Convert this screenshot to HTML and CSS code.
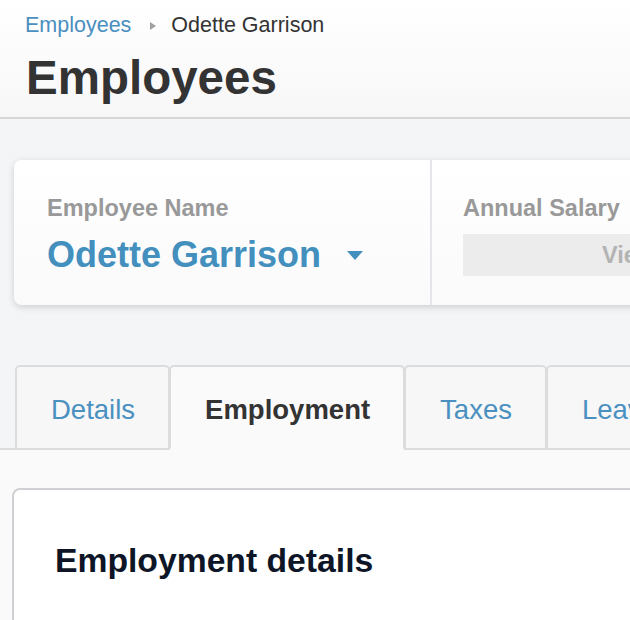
FILE: index.html
```html
<!DOCTYPE html>
<html>
<head>
<meta charset="utf-8">
<link rel="stylesheet" href="styles.css">
</head>
<body>
<header class="page-header">
  <nav class="breadcrumb">
    <a class="crumb-link" href="#">Employees</a>
    <span class="crumb-sep"></span>
    <span class="crumb-current">Odette Garrison</span>
  </nav>
  <h1 class="page-title">Employees</h1>
</header>

<main class="page-body">
  <section class="summary-card">
    <div class="summary-col summary-name">
      <div class="summary-label">Employee Name</div>
      <div class="name-select">
        <span class="name-text">Odette Garrison</span>
        <span class="caret"></span>
      </div>
    </div>
    <div class="summary-col summary-salary">
      <div class="summary-label">Annual Salary</div>
      <div class="salary-box">View</div>
    </div>
  </section>

  <ul class="tabs">
    <li class="tab"><a href="#">Details</a></li>
    <li class="tab tab-active"><a href="#">Employment</a></li>
    <li class="tab"><a href="#">Taxes</a></li>
    <li class="tab"><a href="#">Leave</a></li>
  </ul>

  <div class="tab-panel">
    <div class="content-card">
      <h2 class="content-title">Employment details</h2>
    </div>
  </div>
</main>
</body>
</html>
```

FILE: styles.css
```css
html, body {
  margin: 0;
  padding: 0;
  overflow: hidden;
}
body {
  font-family: "Liberation Sans", Arial, sans-serif;
  background: #f4f5f7;
  color: #333;
  width: 630px;
  height: 620px;
}
a { text-decoration: none; }

.page-header {
  background: linear-gradient(#ffffff, #f7f7f8);
  border-bottom: 2px solid #d6d6d8;
  padding: 13px 25px 11px;
}
.breadcrumb {
  display: flex;
  align-items: center;
  font-size: 21.5px;
  line-height: 1.2;
  white-space: nowrap;
}
.crumb-link { color: #4a8fc0; }
.crumb-sep {
  width: 0;
  height: 0;
  border-top: 4.5px solid transparent;
  border-bottom: 4.5px solid transparent;
  border-left: 6px solid #a0a0a0;
  margin: 0 15px 0 19px;
}
.crumb-current { color: #333; }
.page-title {
  margin: 10px 0 0 1px;
  font-size: 47.5px;
  line-height: 1.2;
  font-weight: bold;
  color: #333;
}

.page-body {
  padding-top: 41px;
  width: 1000px;
}

.summary-card {
  display: flex;
  margin-left: 14px;
  width: 900px;
  height: 145px;
  background: linear-gradient(#ffffff, #fafafa);
  border-radius: 8px;
  box-shadow: 0 2px 7px rgba(0, 0, 0, 0.16);
  box-sizing: border-box;
}
.summary-col {
  padding-top: 34px;
  box-sizing: border-box;
}
.summary-name {
  width: 418px;
  padding-left: 33px;
  border-right: 2px solid #e6e6ea;
}
.summary-salary {
  padding-left: 31px;
}
.summary-label {
  font-size: 23.5px;
  line-height: 1.2;
  font-weight: bold;
  color: #999;
  white-space: nowrap;
}
.name-select {
  display: flex;
  align-items: center;
  margin-top: 11px;
}
.name-text {
  font-size: 36px;
  line-height: 1.2;
  font-weight: bold;
  color: #438fbd;
  white-space: nowrap;
}
.caret {
  width: 0;
  height: 0;
  border-left: 8.5px solid transparent;
  border-right: 8.5px solid transparent;
  border-top: 9px solid #438fbd;
  margin-left: 26px;
  margin-top: 2px;
}
.salary-box {
  margin-top: 12px;
  width: 331px;
  height: 42px;
  background: #ececec;
  color: #b3b3b3;
  font-size: 23.5px;
  font-weight: bold;
  line-height: 42px;
  text-align: center;
}

.tabs {
  list-style: none;
  margin: 60px 0 0;
  padding: 0 0 0 15px;
  display: flex;
  flex-wrap: nowrap;
  border-bottom: 2px solid #dcdcdc;
}
.tab {
  flex: none;
  margin-bottom: -2px;
  margin-left: -1px;
  border: 2px solid #dcdcdc;
  border-radius: 5px 5px 0 0;
  background: #f7f7f7;
}
.tab:first-child { margin-left: 0; }
.tab a {
  display: block;
  padding: 26px 33px 22px 34px;
  font-size: 27.5px;
  line-height: 1.2;
  color: #4a90c0;
  white-space: nowrap;
}
.tab-active {
  background: #fafafa;
  border-bottom-color: #fafafa;
}
.tab-active a {
  color: #333;
  font-weight: bold;
}

.tab-panel {
  background: #fafafa;
  padding: 38px 0 0 12px;
  height: 300px;
}
.content-card {
  width: 900px;
  height: 300px;
  background: #ffffff;
  border: 2px solid #d0d0d4;
  border-radius: 8px;
  padding: 50px 0 0 41px;
  box-sizing: border-box;
}
.content-title {
  margin: 0;
  font-size: 33.7px;
  line-height: 1.2;
  font-weight: bold;
  color: #0d1526;
  white-space: nowrap;
}
```
